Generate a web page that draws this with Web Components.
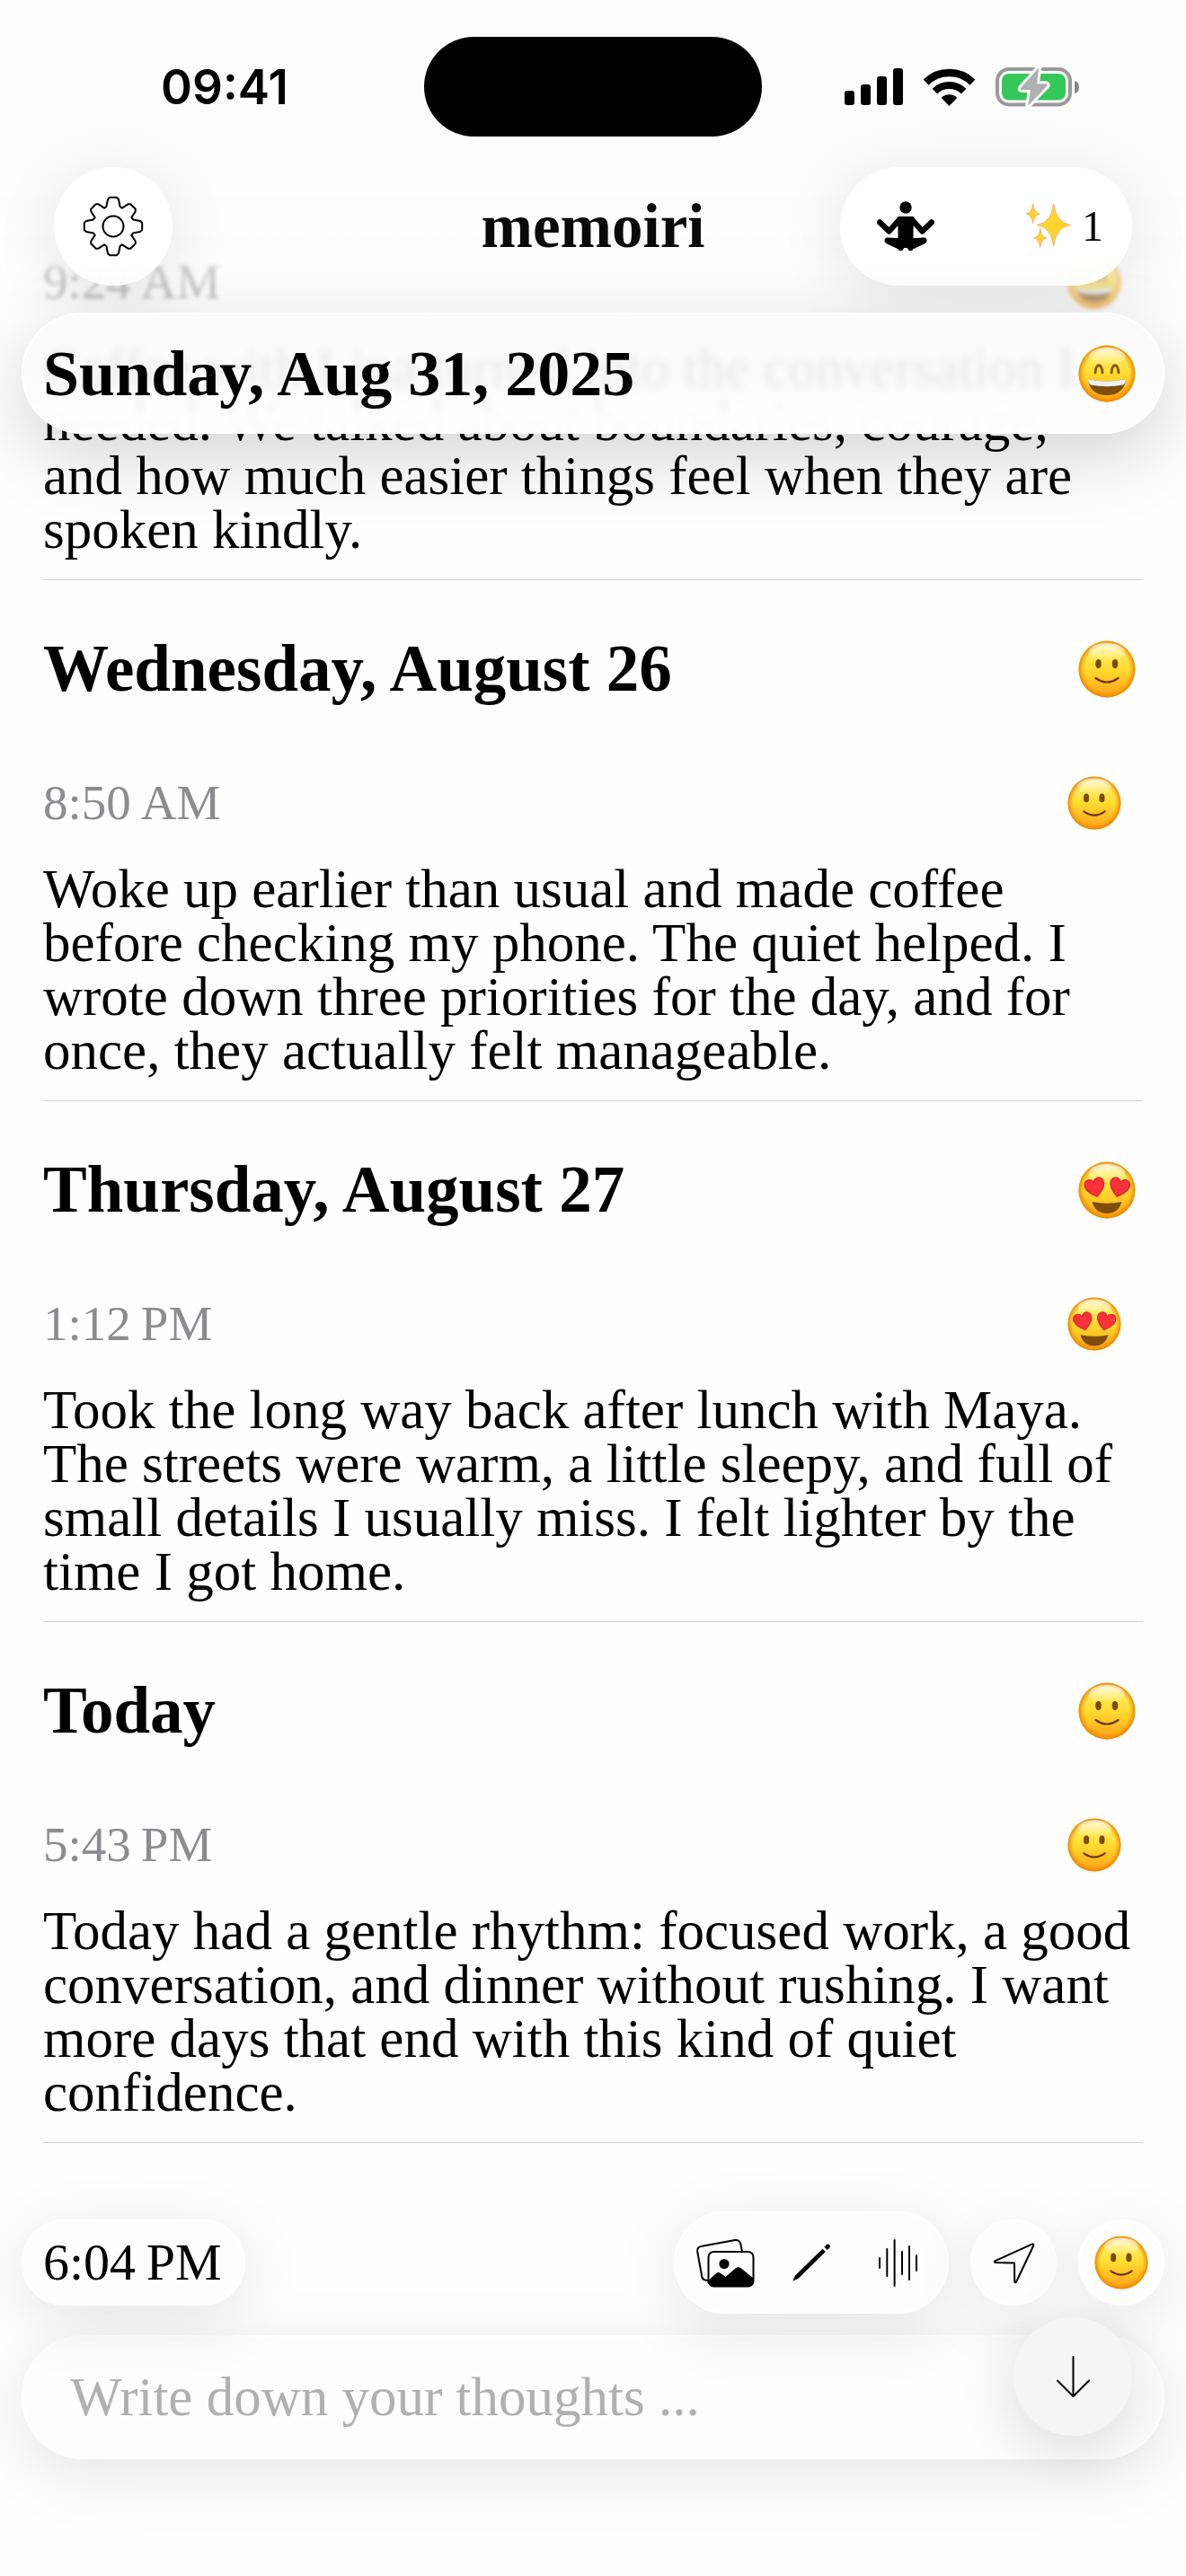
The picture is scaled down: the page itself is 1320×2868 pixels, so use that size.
<!DOCTYPE html>
<html lang="en">
<head>
<meta charset="utf-8">
<meta name="viewport" content="width=device-width, initial-scale=1">
<title>memoiri</title>
<style>
  :root {
    --glass: rgba(253, 253, 253, 0.85);
    --muted: #8c8c90;
    --line: #d2d2d2;
    --shadow: 0 16px 72px rgba(0, 0, 0, 0.1);
  }
  body {
    margin: 0;
    min-height: 100vh;
    background: #fefefe;
    color: #000;
    font-family: "Liberation Serif", "Times New Roman", serif;
  }
  main {
    display: block;
    padding: 66px 48px 483px;
  }
</style>
</head>
<body>
<main>
  <journal-day>
    <journal-entry time="9:24&#8239;AM" mood="grin">Coffee with Lina turned into the conversation I needed. We talked about boundaries, courage, and how much easier things feel when they are spoken kindly.</journal-entry>
  </journal-day>
  <journal-day label="Wednesday, August 26" mood="smile">
    <journal-entry time="8:50&#8239;AM" mood="smile">Woke up earlier than usual and made coffee before checking my phone. The quiet helped. I wrote down three priorities for the day, and for once, they actually felt manageable.</journal-entry>
  </journal-day>
  <journal-day label="Thursday, August 27" mood="love">
    <journal-entry time="1:12&#8239;PM" mood="love">Took the long way back after lunch with Maya. The streets were warm, a little sleepy, and full of small details I usually miss. I felt lighter by the time I got home.</journal-entry>
  </journal-day>
  <journal-day label="Today" mood="smile">
    <journal-entry time="5:43&#8239;PM" mood="smile">Today had a gentle rhythm: focused work, a good conversation, and dinner without rushing. I want more days that end with this kind of quiet confidence.</journal-entry>
  </journal-day>
</main>

<app-header>
  <status-bar slot="status" time="09:41"></status-bar>
  <nav-bar count="1">memoiri</nav-bar>
  <sticky-day slot="day" mood="grin">Sunday, Aug 31, 2025</sticky-day>
</app-header>

<composer-bar time="6:04&#8239;PM" mood="smile" placeholder="Write down your thoughts ..."></composer-bar>

<script>
// small helper so every element attaches its root in the same way
function render(element, html) {
  const template = document.createElement('template')
  template.innerHTML = html
  element.attachShadow({ mode: 'open' }).appendChild(template.content.cloneNode(true))
}

const BUTTON_RESET = `
  button {
    display: flex;
    align-items: center;
    justify-content: center;
    margin: 0;
    padding: 0;
    border: 0;
    background: none;
    color: inherit;
    font: inherit;
    cursor: pointer;
  }
  svg { display: block; overflow: visible; }
`

/*
  mood-face: round emoji
  attributes: name (smile | grin | love)
  custom properties: --size
*/
const HEART = 'M0 7 C-5 3.5 -7.4 0.5 -6.4 -3 C-5.4 -6.2 -1.2 -6.2 0 -2.8 C1.2 -6.2 5.4 -6.2 6.4 -3 C7.4 0.5 5 3.5 0 7 Z'

const FACES = {
  smile: `
    <ellipse cx="22.5" cy="26" rx="3.3" ry="5.2" fill="#7d4a05"/>
    <ellipse cx="41" cy="26" rx="3.3" ry="5.2" fill="#7d4a05"/>
    <path d="M19.500 42 Q32 51 44.500 42" fill="none" stroke="#6d3605" stroke-width="2.200" stroke-linecap="round"/>`,
  grin: `
    <path d="M19 31 C20 20 26 20 27 31 M37 31 C38 20 44 20 45 31" fill="none" stroke="#8a5606" stroke-width="2.800" stroke-linecap="round"/>
    <path d="M11 38 Q32 43 53 38 C52 50 44 56 32 56 C20 56 12 50 11 38 Z" fill="#80500b"/>
    <path d="M11 38 Q32 43 53 38 Q53 42 50 44.500 Q32 48 14 44.500 Q11 42 11 38 Z" fill="#eef0f6"/>`,
  love: `
    <g fill="#f8323a" stroke="#d3262f" stroke-width="0.700">
      <path d="${HEART}" transform="translate(18.500 28) rotate(-14) scale(1.650)" />
      <path d="${HEART}" transform="translate(46 28) rotate(14) scale(1.650)" />
    </g>
    <path d="M15.500 45 Q32 48.500 48.500 45 C46 54 40 58 32 58 C24 58 18 54 15.500 45 Z" fill="#7d4e0a"/>`
}

class MoodFace extends HTMLElement {
  connectedCallback() {
    if (this.shadowRoot) return
    const name = this.getAttribute('name') ?? 'smile'
    render(this, `
      <style>
        :host { display: block; flex: none; width: var(--size, 60px); height: var(--size, 60px); }
        svg { display: block; width: 100%; height: 100%; }
      </style>
      <svg viewBox="0 0 64 64" role="img" aria-label="${name}">
        <defs>
          <linearGradient id="skin" x1="0" y1="0" x2="0" y2="1">
            <stop offset="0" stop-color="#fff39a"/>
            <stop offset="0.200" stop-color="#ffec62"/>
            <stop offset="0.500" stop-color="#ffdc30"/>
            <stop offset="1" stop-color="#ff9f16"/>
          </linearGradient>
          <radialGradient id="rim">
            <stop offset="0.780" stop-color="#f59a00" stop-opacity="0"/>
            <stop offset="1" stop-color="#e98200" stop-opacity="0.950"/>
          </radialGradient>
          <linearGradient id="shine" x1="0" y1="0" x2="0" y2="1">
            <stop offset="0" stop-color="#fff" stop-opacity="0.700"/>
            <stop offset="1" stop-color="#fff" stop-opacity="0"/>
          </linearGradient>
        </defs>
        <circle cx="32" cy="32" r="31.500" fill="url(#skin)"/>
        <circle cx="32" cy="32" r="31.500" fill="url(#rim)"/>
        <ellipse cx="32" cy="13" rx="20" ry="10" fill="url(#shine)"/>
        ${FACES[name]}
      </svg>
    `)
  }
}

/*
  journal-entry: time, mood and the text of one note
  attributes: time, mood
*/
class JournalEntry extends HTMLElement {
  connectedCallback() {
    if (this.shadowRoot) return
    render(this, `
      <style>
        :host { display: block; }
        .meta {
          display: flex;
          align-items: center;
          justify-content: space-between;
          height: 60px;
          padding-right: 24px;
        }
        time { font-size: 55px; line-height: 60px; color: var(--muted); }
        p { margin: 36px 0 25px; padding-right: 8px; font-size: 61px; line-height: 60px; }
      </style>
      <div class="meta">
        <time>${this.getAttribute('time')}</time>
        <mood-face name="${this.getAttribute('mood')}"></mood-face>
      </div>
      <p><slot></slot></p>
    `)
  }
}

class JournalDay extends HTMLElement {
  connectedCallback() {
    if (this.shadowRoot) return
    const label = this.getAttribute('label')
    render(this, `
      <style>
        :host { display: block; border-bottom: 1px solid var(--line); }
        header {
          display: flex;
          align-items: center;
          justify-content: space-between;
          height: 100px;
          padding: 49px 8px 69px 0;
        }
        h2 { margin: 0; font-size: 73px; line-height: 80px; }
        mood-face { --size: 64px; }
      </style>
      <header>
        ${label ? `<h2>${label}</h2><mood-face name="${this.getAttribute('mood')}"></mood-face>` : ''}
      </header>
      <slot></slot>
    `)
  }
}

class StatusBar extends HTMLElement {
  connectedCallback() {
    if (this.shadowRoot) return
    render(this, `
      <style>
        :host {
          display: grid;
          grid-template-columns: 1fr 376px 1fr;
          align-items: center;
          height: 111px;
          padding: 41px 28px 34px;
        }
        svg { display: block; overflow: visible; }
        time {
          justify-self: center;
          font: 600 53px/60px Inter, "Liberation Sans", sans-serif;
        }
        .island { height: 111px; border-radius: 56px; background: #000; }
        .icons { display: flex; align-items: center; justify-self: center; gap: 23px; }
      </style>
      <time>${this.getAttribute('time')}</time>
      <div class="island"></div>
      <div class="icons">
        <svg width="65" height="41" viewBox="0 0 65 41" aria-label="Signal">
          <rect x="0" y="25" width="11" height="16" rx="3"/>
          <rect x="18" y="18" width="11" height="23" rx="3"/>
          <rect x="36" y="9" width="11" height="32" rx="3"/>
          <rect x="54" y="0" width="11" height="41" rx="3"/>
        </svg>
        <svg width="57" height="42" viewBox="0 0 57 42" aria-label="Wi-Fi">
          <g fill="none" stroke="#000">
            <path d="M2.600 15.600 A37 37 0 0 1 54.400 15.600" stroke-width="8.500"/>
            <path d="M12.400 25.600 A23 23 0 0 1 44.600 25.600" stroke-width="8"/>
          </g>
          <path d="M28.500 42 L20.200 33.500 Q20 32.500 21 31.600 A13 13 0 0 1 36 31.600 Q37 32.500 36.800 33.500 Z"/>
        </svg>
        <svg width="93" height="43" viewBox="0 0 93 43" aria-label="Battery charging">
          <rect x="2" y="2" width="81" height="39.500" rx="13" fill="none" stroke="#999" stroke-width="4"/>
          <rect x="7" y="7" width="71" height="29.500" rx="8" fill="#34c759"/>
          <path d="M88 15 Q93 16 93 22 Q93 28 88 29 Z" fill="#888"/>
          <path id="bolt" d="M48.300 0.300 L28 23 Q27 25 29 25 L39 25 L36 43 L57.500 20.500 Q58 18.300 56 18.300 L46 18.300 Z" fill="#b0b0b0" stroke="#fcfcfc" stroke-width="6" stroke-linejoin="round" paint-order="stroke"/>
        </svg>
      </div>
    `)
  }
}

// outline of an eight-tooth cog round (33, 33)
function cogPath() {
  const tooth = [[-7.600, -22], [-6, -30], [-4, -32.200], [4, -32.200], [6, -30], [7.600, -22]]
  const points = []
  for (let i = 0; i < 8; i++) {
    const a = i * Math.PI / 4
    const r = i % 2 ? 0.970 : 1
    tooth.forEach(([x, y]) => {
      const px = 33 + (x * Math.cos(a) - y * Math.sin(a)) * r
      const py = 33 + (x * Math.sin(a) + y * Math.cos(a)) * r
      points.push(px.toFixed(1) + ' ' + py.toFixed(1))
    })
  }
  return 'M' + points.join(' L') + ' Z'
}

// four-pointed star
function starPath(x, y, w, h) {
  const i = w * 0.140
  const j = h * 0.110
  return `M${x} ${y - h} Q${x + i} ${y - j} ${x + w} ${y} Q${x + i} ${y + j} ${x} ${y + h} Q${x - i} ${y + j} ${x - w} ${y} Q${x - i} ${y - j} ${x} ${y - h} Z`
}

class NavBar extends HTMLElement {
  connectedCallback() {
    if (this.shadowRoot) return
    render(this, `
      <style>
        ${BUTTON_RESET}
        :host {
          display: grid;
          grid-template-columns: 1fr auto 1fr;
          align-items: center;
          padding: 0 60px;
        }
        h1 { margin: 0; font-size: 69px; line-height: 80px; color: #0a0a0a; }
        .pill {
          height: 132px;
          border-radius: 66px;
          background: rgba(255, 255, 255, 0.97);
          box-shadow: var(--shadow);
        }
        .settings { width: 132px; }
        .actions {
          display: flex;
          align-items: center;
          justify-self: end;
          gap: 102px;
          padding: 0 32px 0 41px;
        }
        .actions button { height: 100%; }
        .streak { gap: 12px; font-size: 48px; line-height: 60px; }
      </style>
      <button class="pill settings" aria-label="Settings">
        <svg width="66" height="66" viewBox="0 0 66 66" fill="none" stroke="#000" stroke-width="2" stroke-linejoin="round">
          <path d="${cogPath()}"/>
          <circle cx="33" cy="33" r="11.500"/>
        </svg>
      </button>
      <h1><slot></slot></h1>
      <div class="pill actions">
        <button aria-label="Meditate">
          <svg width="64" height="56" viewBox="0 0 64 56">
            <circle cx="32" cy="7" r="6.700"/>
            <path d="M22.500 18 Q24 17 26 17 L38 17 Q40 17 41.500 18 L40.500 31 L40.500 52 L23.500 52 L23.500 31 Z"/>
            <g fill="none" stroke="#000" stroke-linecap="round" stroke-linejoin="round">
              <path d="M3.200 23.500 L13.500 33.500 L25 20.500 M60.800 23.500 L50.500 33.500 L39 20.500" stroke-width="6.400"/>
              <path d="M11.700 43.700 L24 44.500 L38 50 M52.300 43.700 L40 44.500 L26 50" stroke-width="6.400"/>
              <path d="M13 45 L27 51.500 M51 45 L37 51.500" stroke-width="6"/>
            </g>
            <circle cx="26.500" cy="52.500" r="2.800"/>
            <circle cx="37.500" cy="52.500" r="2.800"/>
          </svg>
        </button>
        <button class="streak">
          <svg width="50" height="48" viewBox="0 0 50 48" fill="#fdd32c" stroke="#f6a55c" stroke-width="0.800">
            <path d="${starPath(30.700, 22.500, 18.500, 23.500)}"/>
            <path d="${starPath(7.700, 10, 7.500, 11)}"/>
            <path d="${starPath(15.700, 37, 7, 10.500)}"/>
          </svg>
          <span>${this.getAttribute('count')}</span>
        </button>
      </div>
    `)
  }
}

class StickyDay extends HTMLElement {
  connectedCallback() {
    if (this.shadowRoot) return
    render(this, `
      <style>
        :host {
          display: flex;
          align-items: center;
          justify-content: space-between;
          box-sizing: border-box;
          height: 135px;
          margin: 30px 24px 0;
          padding: 0 32px 0 24px;
          border-radius: 68px;
          background: linear-gradient(rgba(250, 250, 250, 0.9), rgba(252, 252, 252, 0.92) 70%, rgba(254, 254, 254, 0.98) 85%);
          -webkit-backdrop-filter: blur(4px);
          backdrop-filter: blur(4px);
          box-shadow: inset 0 0 0 2px #fff, 0 24px 80px rgba(0, 0, 0, 0.17);
        }
        h2 { margin: 0; font-size: 72px; line-height: 80px; }
        mood-face { --size: 64px; }
      </style>
      <h2><slot></slot></h2>
      <mood-face name="${this.getAttribute('mood')}"></mood-face>
    `)
  }
}

/*
  app-header: stays over the list, the notes fade out under it
  slots: status, (default), day
*/
class AppHeader extends HTMLElement {
  connectedCallback() {
    if (this.shadowRoot) return
    render(this, `
      <style>
        :host { display: block; position: fixed; top: 0; left: 0; right: 0; }
        .fade {
          position: absolute;
          inset: 0 0 135px 0;
          background: linear-gradient(#fcfcfc 55%, rgba(252, 252, 252, 0.4));
          -webkit-backdrop-filter: blur(2px);
          backdrop-filter: blur(2px);
        }
        .content { position: relative; }
      </style>
      <div class="fade"></div>
      <div class="content">
        <slot name="status"></slot>
        <slot></slot>
        <slot name="day"></slot>
      </div>
    `)
  }
}

/*
  composer-bar: time, attachments and the text box of a new note
  attributes: time, mood, placeholder
*/
class ComposerBar extends HTMLElement {
  connectedCallback() {
    if (this.shadowRoot) return
    render(this, `
      <style>
        ${BUTTON_RESET}
        :host {
          display: block;
          position: fixed;
          bottom: 0;
          left: 0;
          right: 0;
          padding: 0 24px 130px;
        }
        .row {
          display: flex;
          align-items: center;
          gap: 24px;
          margin-bottom: 24px;
        }
        .glass {
          background: var(--glass);
          box-shadow: inset 0 0 0 2px #fff, var(--shadow);
        }
        .time {
          height: 96px;
          margin-right: auto;
          padding: 0 26px 0 24px;
          border-radius: 48px;
          font-size: 58px;
          line-height: 60px;
        }
        .tools { display: flex; height: 114px; padding: 0 9px; border-radius: 57px; }
        .tools button { width: 96px; }
        .round { width: 96px; height: 96px; border-radius: 50%; }
        input {
          display: block;
          box-sizing: border-box;
          width: 100%;
          height: 138px;
          padding: 0 54px;
          border: 0;
          border-radius: 69px;
          outline: 0;
          color: inherit;
          font: inherit;
          font-size: 61px;
        }
        input::placeholder { color: #b0b0b0; opacity: 1; }
        .down {
          position: absolute;
          top: 118px;
          right: 60px;
          width: 132px;
          height: 132px;
          border-radius: 50%;
          background: #f5f5f5;
          box-shadow: 0 16px 64px rgba(0, 0, 0, 0.14);
        }
      </style>
      <div class="row">
        <button class="glass time">${this.getAttribute('time')}</button>
        <div class="glass tools">
          <button aria-label="Photos">
            <svg width="64" height="53" viewBox="0 0 64 53" fill="none" stroke="#000" stroke-width="2" stroke-linejoin="round">
              <path d="M13 46 L10 45.500 Q7 45 6.300 42 L1.200 14 Q0.500 9 5.200 8 L43 1 Q48 0.500 49.200 5 L51 13.700"/>
              <rect x="13.500" y="14" width="50" height="38.500" rx="6" fill="#fdfdfd"/>
              <circle cx="31" cy="27.500" r="5.600" fill="#000" stroke="none"/>
              <path d="M13.500 46 L22 38 Q24.600 36 27 38 L32.500 42 L43.500 32.500 Q47 30 50 32.500 L63.500 43.500 L63.500 47 Q63.500 52.500 58 52.500 L19 52.500 Q13.500 52.500 13.500 46 Z" fill="#000" stroke="none"/>
              <path d="M13.500 45 V49" stroke="#000"/>
            </svg>
          </button>
          <button aria-label="Draw">
            <svg width="42" height="42" viewBox="0 0 42 42">
              <path d="M0.300 41.700 L3 35.600 L33.500 5.700 L36.800 9 L6.500 38.700 Z"/>
              <path d="M35.500 3.700 L37 2 Q39.500 -0.500 41.300 1.500 Q43 3.500 40.500 5.500 L38.700 7 Z"/>
            </svg>
          </button>
          <button aria-label="Record">
            <svg width="43" height="53" viewBox="0 0 43 53" stroke="#000" stroke-width="2" stroke-linecap="round">
              <path d="M1 21 V32 M9.300 11 V41 M17.600 1 V52 M26 14 V39 M34 8 V45 M42 18 V35"/>
            </svg>
          </button>
        </div>
        <button class="glass round" aria-label="Location">
          <svg width="45" height="45" viewBox="0 0 45 45" fill="none" stroke="#000" stroke-width="2" stroke-linejoin="round">
            <path d="M42.500 1.600 Q45 0.800 44.200 3.200 L25.200 43.200 Q23.700 45.500 23.200 43 L23 22.500 L2 22 Q-0.500 21.300 1.700 20.200 Z"/>
          </svg>
        </button>
        <button class="glass round" aria-label="Mood">
          <mood-face name="${this.getAttribute('mood')}"></mood-face>
        </button>
      </div>
      <input class="glass" type="text" aria-label="New note" placeholder="${this.getAttribute('placeholder')}">
      <button class="down" aria-label="Scroll to latest">
        <svg width="37" height="46" viewBox="0 0 37 46" fill="none" stroke="#000" stroke-width="2" stroke-linecap="round" stroke-linejoin="round">
          <path d="M18.500 1 V45 M1 27.500 L18.500 45 L36 27.500"/>
        </svg>
      </button>
    `)
  }
}

customElements.define('mood-face', MoodFace)
customElements.define('journal-entry', JournalEntry)
customElements.define('journal-day', JournalDay)
customElements.define('status-bar', StatusBar)
customElements.define('nav-bar', NavBar)
customElements.define('sticky-day', StickyDay)
customElements.define('app-header', AppHeader)
customElements.define('composer-bar', ComposerBar)
</script>
</body>
</html>
